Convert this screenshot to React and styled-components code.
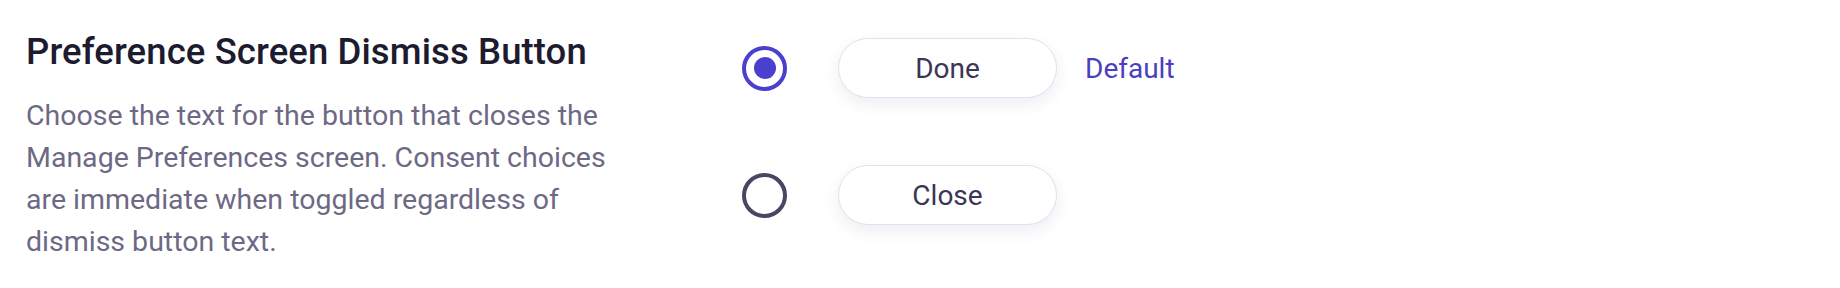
import styled, { createGlobalStyle } from 'styled-components'

const Global = createGlobalStyle`
  body {
    margin: 0;
    background: #ffffff;
    font-family: Roboto, "Liberation Sans", sans-serif;
  }
`

const Section = styled.div`
  display: flex;
  align-items: flex-start;
  padding: 30px 26px;
`

const Info = styled.div`
  flex: 0 0 596px;
  margin-right: 120px;
`

const Title = styled.h2`
  margin: 0 0 21px;
  font-size: 36.5px;
  line-height: 44px;
  font-weight: 500;
  letter-spacing: 0.1px;
  color: #1d1b2f;
`

const Description = styled.p`
  margin: 0;
  font-size: 28.5px;
  line-height: 42px;
  color: #6d6985;
`

const Options = styled.div`
  display: flex;
  flex-direction: column;
  gap: 67px;
  padding-top: 8px;
`

const Option = styled.label`
  display: flex;
  align-items: center;
  height: 60px;
  cursor: pointer;
`

const Radio = styled.span`
  box-sizing: border-box;
  width: 45px;
  height: 45px;
  border-radius: 50%;
  border: 4.5px solid ${props => (props.checked ? '#4b3fcf' : '#4a4560')};
  display: flex;
  align-items: center;
  justify-content: center;
  margin-right: 51px;

  &::after {
    content: '';
    width: 22px;
    height: 22px;
    border-radius: 50%;
    background: #4b3fcf;
    display: ${props => (props.checked ? 'block' : 'none')};
  }
`

const Pill = styled.span`
  box-sizing: border-box;
  width: 219px;
  height: 60px;
  border-radius: 30px;
  border: 1.5px solid #e4def1;
  background: #fff;
  box-shadow: 0 6px 16px rgba(40, 30, 80, 0.08);
  display: flex;
  align-items: center;
  justify-content: center;
  font-size: 28px;
  color: #3a3654;
`

const Tag = styled.span`
  margin-left: 28px;
  font-size: 28px;
  color: #4a3fc0;
`

const options = [
  { label: 'Done', checked: true, isDefault: true },
  { label: 'Close', checked: false, isDefault: false },
]

export default function App() {
  return (
    <>
      <Global />
      <Section>
        <Info>
          <Title>Preference Screen Dismiss Button</Title>
          <Description>
            Choose the text for the button that closes the Manage Preferences screen. Consent
            choices are immediate when toggled regardless of dismiss button text.
          </Description>
        </Info>
        <Options>
          {options.map(o => (
            <Option key={o.label}>
              <Radio checked={o.checked} />
              <Pill>{o.label}</Pill>
              {o.isDefault && <Tag>Default</Tag>}
            </Option>
          ))}
        </Options>
      </Section>
    </>
  )
}
